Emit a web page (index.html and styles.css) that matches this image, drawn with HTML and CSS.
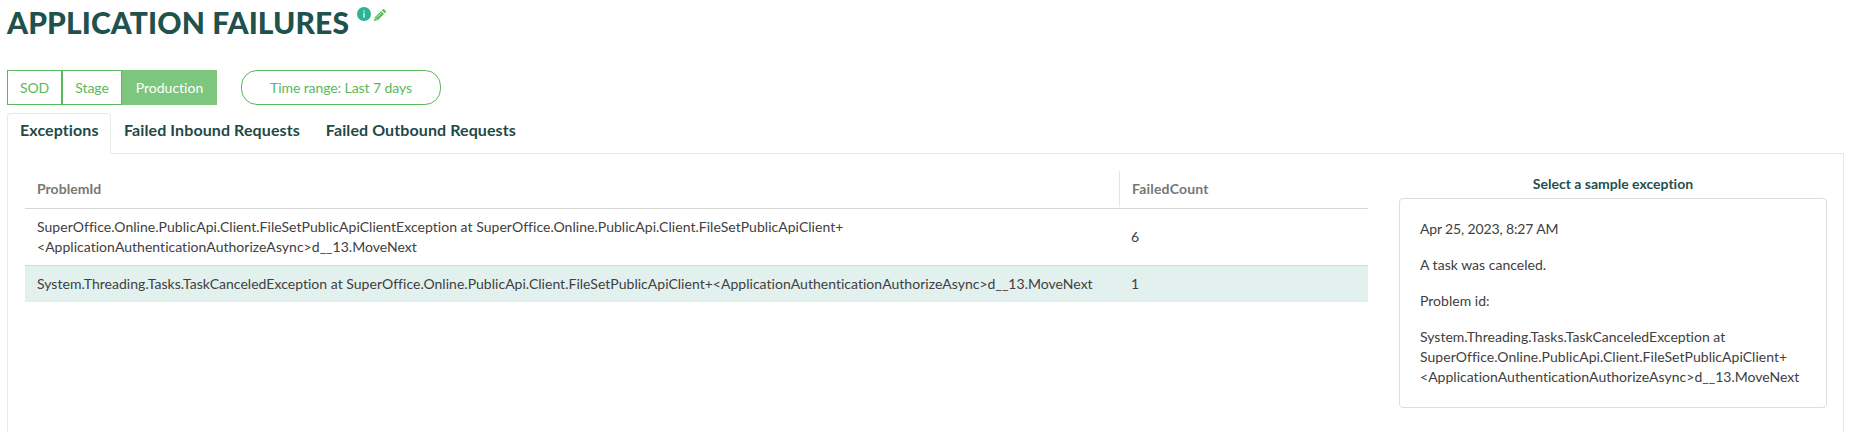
FILE: index.html
```html
<!DOCTYPE html>
<html lang="en">
<head>
<meta charset="utf-8">
<title>Application failures</title>
<link rel="stylesheet" href="styles.css">
</head>
<body>
<header class="page-head">
  <h1 class="title">APPLICATION FAILURES</h1>
  <svg class="info" viewBox="0 0 14 14"><circle cx="7" cy="7" r="7" fill="#2bb394"/><path d="M6.200 3.400h1.500v1.300H6.200zM6.200 5.800h1.500v4.900H6.200z" fill="#d5f0ea"/></svg>
  <svg class="pencil" viewBox="0 0 12 12"><path d="M0 12l.8-3.700L7.100 2l2.900 2.900-6.300 6.300zM7.800 1.300L8.800.3q.6-.6 1.200 0L11.700 2q.6.6 0 1.200l-1 1z" fill="#5cb85c"/><path d="M2.600 8.500l4.700-4.700M1.300 9.200l1.500 1.500" stroke="#fff" stroke-width=".7"/></svg>
</header>
<div class="filters">
  <div class="group">
    <button class="btn sod">SOD</button><button class="btn stage">Stage</button><button class="btn active">Production</button>
  </div>
  <button class="btn range">Time range: Last 7 days</button>
</div>
<nav class="tabs">
  <a class="tab current">Exceptions</a>
  <a class="tab">Failed Inbound Requests</a>
  <a class="tab">Failed Outbound Requests</a>
</nav>
<main class="panel">
  <section class="grid">
    <div class="row head"><div class="cell">ProblemId</div><div class="cell">FailedCount</div></div>
    <div class="row"><div class="cell"><span class="wide">SuperOffice.Online.PublicApi.Client.FileSetPublicApiClientException at SuperOffice.Online.PublicApi.Client.FileSetPublicApiClient+</span><br>&lt;ApplicationAuthenticationAuthorizeAsync&gt;d__13.MoveNext</div><div class="cell">6</div></div>
    <div class="row selected"><div class="cell">System.Threading.Tasks.TaskCanceledException at SuperOffice.Online.PublicApi.Client.FileSetPublicApiClient+&lt;ApplicationAuthenticationAuthorizeAsync&gt;d__13.MoveNext</div><div class="cell">1</div></div>
  </section>
  <aside class="sample">
    <h2 class="sample-title">Select a sample exception</h2>
    <div class="card">
      <p class="date">Apr 25, 2023, 8:27 AM</p>
      <p>A task was canceled.</p>
      <p>Problem id:</p>
      <p>System.Threading.Tasks.TaskCanceledException at<br><span class="wide">SuperOffice.Online.PublicApi.Client.FileSetPublicApiClient+</span><br>&lt;ApplicationAuthenticationAuthorizeAsync&gt;d__13.MoveNext</p>
    </div>
  </aside>
</main>
</body>
</html>
```
FILE: styles.css
```css
* { box-sizing: border-box; }
body {
  margin: 0;
  padding: 0 7px;
  height: 432px;
  overflow: hidden;
  display: flex;
  flex-direction: column;
  background: #fff;
  color: #404040;
  font: 14px/20px Lato, sans-serif;
  font-variant-ligatures: none;
}
.page-head { display: flex; height: 70px; align-items: flex-start; }
.title { margin: 0; padding-top: 4px; width: 350px; color: #1f514d; font-size: 30px; line-height: 36px; font-weight: 900; letter-spacing: .1px; white-space: nowrap; }
.info { width: 14px; height: 14px; margin-top: 7px; }
.pencil { width: 12px; height: 12px; margin: 9px 0 0 3px; }
.filters { display: flex; gap: 24px; height: 43px; }
.group { display: flex; height: 35px; }
.btn { height: 35px; padding: 0; border: 1px solid #5cb85c; background: #fff; color: #5cb85c; font: 14px/20px Lato, sans-serif; font-variant-ligatures: none; letter-spacing: -.08px; }
.sod { width: 55px; }
.stage { width: 60px; }
.active { width: 95px; background: #7dc67d; border-color: #7dc67d; color: #fff; letter-spacing: 0; }
.range { width: 200px; border-radius: 16px; }
.tabs { display: flex; height: 41px; color: #1f4a47; font-size: 16px; font-weight: 700; line-height: 20px; letter-spacing: .1px; }
.tab { padding: 7px 13px; white-space: nowrap; }
.current { width: 104px; height: 41px; padding: 6px 12px; border: 1px solid #e8e8e8; border-bottom: 0; border-radius: 4px 4px 0 0; background: #fff; z-index: 1; }
.panel { flex: 1; display: flex; gap: 31px; margin-top: -1px; padding: 17px 15px 0 17px; border: 1px solid #e8e8e8; border-bottom: 0; }
.grid { width: 1343px; }
.row { display: grid; grid-template-columns: 1094px 249px; align-items: center; height: 57px; border-bottom: 1px solid #d5d8d7; }
.cell { padding: 0 12px; white-space: nowrap; letter-spacing: .024px; }
.wide { letter-spacing: .036px; }
.head { height: 38px; color: #777; font-weight: 700; align-items: start; }
.head .cell { height: 36px; line-height: 36px; }
.head .cell + .cell { border-left: 1px solid #e5e5e5; letter-spacing: .2px; }
.selected { height: 36px; border: 0; background: #e2f1ee; }
.sample { width: 428px; }
.sample-title { margin: 3px 0 4px; color: #1f514d; font-size: 14px; line-height: 20px; text-align: center; }
.card { height: 210px; padding: 20px; border: 1px solid #ddd; border-radius: 4px; }
.card p { margin: 0 0 16px; white-space: nowrap; letter-spacing: .015px; }
.card .date { letter-spacing: -.14px; }
```
